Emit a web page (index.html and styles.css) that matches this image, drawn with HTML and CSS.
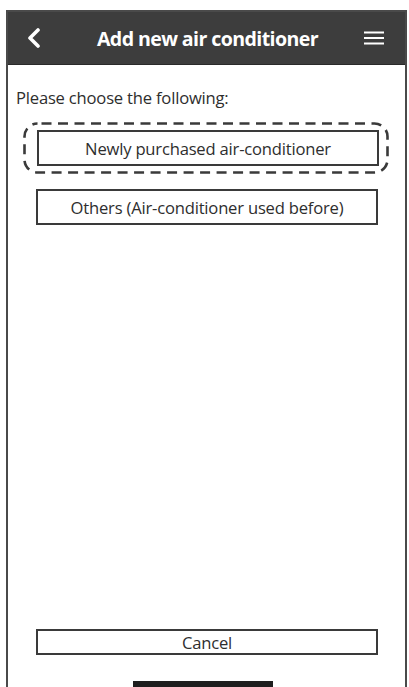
FILE: index.html
```html
<!DOCTYPE html>
<html>
<head>
<meta charset="utf-8">
<link rel="stylesheet" href="styles.css">
</head>
<body>
<div class="phone">
  <header class="topbar">
    <svg class="back" width="16" height="20" viewBox="0 0 16 20"><path d="M12 2 L4 10 L12 18" fill="none" stroke="#fff" stroke-width="3.6" stroke-linecap="round" stroke-linejoin="round"/></svg>
    <h1 class="title">Add new air conditioner</h1>
    <svg class="menu" width="22" height="16" viewBox="0 0 22 16"><path d="M1 2.5 H21 M1 8 H21 M1 13.5 H21" stroke="#fff" stroke-width="2"/></svg>
  </header>
  <main class="content">
    <p class="prompt">Please choose the following:</p>
    <div class="highlight">
      <svg class="dash" width="366" height="52" viewBox="0 0 366 52"><rect x="1.5" y="1.5" width="363" height="49" rx="13" ry="13" fill="none" stroke="#3a3a3a" stroke-width="2.6" stroke-dasharray="10 6.5" stroke-dashoffset="-4"/></svg>
      <div class="btn">Newly purchased air-conditioner</div>
    </div>
    <div class="btn second">Others (Air-conditioner used before)</div>
  </main>
  <footer class="footer">
    <div class="btn cancel">Cancel</div>
    <div class="homebar"></div>
  </footer>
</div>
</body>
</html>
```
FILE: styles.css
```css
html, body {
  margin: 0;
  padding: 0;
  background: #fff;
}
body {
  font-family: "Open Sans", "Noto Sans", sans-serif;
  color: #2e2e2e;
}
.phone {
  box-sizing: border-box;
  margin: 10px 0 0 6px;
  width: 401px;
  height: 677px;
  border: 2px solid #4a4a4a;
  border-bottom: none;
  display: flex;
  flex-direction: column;
}
.topbar {
  height: 52px;
  background: #3d3d3d;
  display: flex;
  align-items: center;
  padding: 0 20px 0 18px;
  border-bottom: 1px solid #2a2a2a;
}
.back {
  display: block;
}
.title {
  flex: 1;
  margin: 0;
  text-align: center;
  color: #fff;
  font-size: 19.6px;
  font-weight: 700;
  letter-spacing: -0.6px;
  padding-left: 10px;
}
.menu {
  display: block;
}
.content {
  flex: 1;
  padding: 22px 0 0 0;
  display: flex;
  flex-direction: column;
}
.prompt {
  margin: 0 0 13px 8px;
  font-size: 16.6px;
  line-height: 22px;
  letter-spacing: -0.2px;
  color: #2e2e2e;
}
.highlight {
  position: relative;
  margin-left: 15px;
  width: 366px;
  height: 52px;
  box-sizing: border-box;
  padding: 8px 10px 8px 14px;
}
.dash {
  position: absolute;
  left: 0;
  top: 0;
  display: block;
}
.btn {
  box-sizing: border-box;
  width: 342px;
  height: 36px;
  border: 2px solid #3a3a3a;
  display: flex;
  align-items: center;
  justify-content: center;
  font-size: 16.6px;
  letter-spacing: -0.2px;
  color: #2e2e2e;
}
.second {
  margin: 15px 0 0 28px;
}
.footer {
  display: flex;
  flex-direction: column;
  align-items: flex-start;
}
.cancel {
  height: 26px;
  margin-left: 28px;
  font-size: 16.6px;
}
.homebar {
  margin: 26px 0 0 125px;
  width: 140px;
  height: 6px;
  background: #1e1e1e;
}
```
